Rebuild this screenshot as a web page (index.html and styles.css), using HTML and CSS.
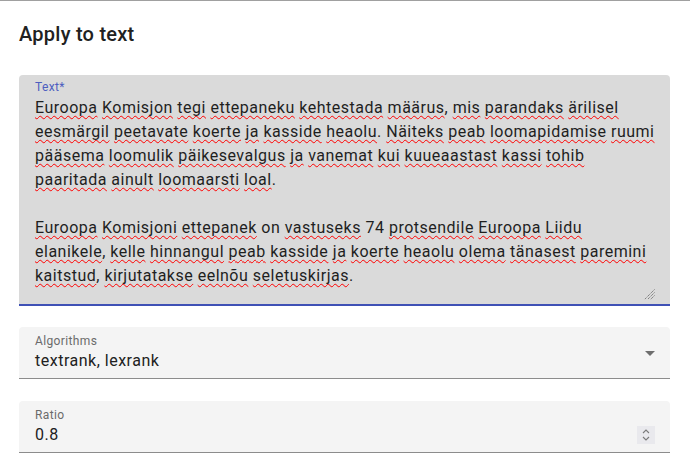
FILE: index.html
```html
<!DOCTYPE html>
<html lang="et">
<head>
<meta charset="utf-8">
<title>Apply to text</title>
<link rel="stylesheet" href="styles.css">
</head>
<body>
<div class="page">
  <h2 class="title">Apply to text</h2>

  <div class="textfield">
    <div class="tf-label">Text*</div>
    <div class="tf-content">
      <p><span class="sp">Euroopa</span> <span class="sp">Komisjon</span> <span class="sp">tegi</span> <span class="sp">ettepaneku</span> <span class="sp">kehtestada</span> <span class="sp">määrus</span>, <span class="sp">mis</span> <span class="sp">parandaks</span> <span class="sp">ärilisel</span><br><span class="sp">eesmärgil</span> <span class="sp">peetavate</span> <span class="sp">koerte</span> <span class="sp">ja</span> <span class="sp">kasside</span> <span class="sp">heaolu</span>. <span class="sp">Näiteks</span> <span class="sp">peab</span> <span class="sp">loomapidamise</span> <span class="sp">ruumi</span><br><span class="sp">pääsema</span> <span class="sp">loomulik</span> <span class="sp">päikesevalgus</span> <span class="sp">ja</span> <span class="sp">vanemat</span> <span class="sp">kui</span> <span class="sp">kuueaastast</span> <span class="sp">kassi</span> <span class="sp">tohib</span><br><span class="sp">paaritada</span> <span class="sp">ainult</span> <span class="sp">loomaarsti</span> <span class="sp">loal</span>.</p>
      <p class="para2"><span class="sp">Euroopa</span> <span class="sp">Komisjoni</span> <span class="sp">ettepanek</span> on <span class="sp">vastuseks</span> 74 <span class="sp">protsendile</span> <span class="sp">Euroopa</span> <span class="sp">Liidu</span><br><span class="sp">elanikele</span>, <span class="sp">kelle</span> <span class="sp">hinnangul</span> <span class="sp">peab</span> <span class="sp">kasside</span> <span class="sp">ja</span> <span class="sp">koerte</span> <span class="sp">heaolu</span> <span class="sp">olema</span> <span class="sp">tänasest</span> <span class="sp">paremini</span><br><span class="sp">kaitstud</span>, <span class="sp">kirjutatakse</span> <span class="sp">eelnõu</span> <span class="sp">seletuskirjas</span>.</p>
    </div>
    <svg class="resizer" width="11" height="11" viewBox="0 0 11 11" aria-hidden="true">
      <line x1="10.5" y1="0.5" x2="0.5" y2="10.5" stroke="#6f6f6f" stroke-width="1" stroke-dasharray="1.2 0.8"/>
      <line x1="10.5" y1="3.5" x2="3.5" y2="10.5" stroke="#6f6f6f" stroke-width="1" stroke-dasharray="1.2 0.8"/>
      <line x1="10.5" y1="6.5" x2="6.5" y2="10.5" stroke="#6f6f6f" stroke-width="1" stroke-dasharray="1.2 0.8"/>
    </svg>
  </div>

  <div class="field select">
    <div class="field-main">
      <div class="field-label">Algorithms</div>
      <div class="field-value">textrank, lexrank</div>
    </div>
    <svg class="arrow" width="10" height="5" viewBox="0 0 10 5" aria-hidden="true">
      <path d="M0 0 L10 0 L5 5 Z" fill="#6e6e6e"/>
    </svg>
  </div>

  <div class="field number">
    <div class="field-main">
      <div class="field-label">Ratio</div>
      <div class="field-row">
        <div class="field-value">0.8</div>
        <svg class="spinner" width="18" height="18" viewBox="0 0 18 18" aria-hidden="true">
          <rect x="0" y="0" width="18" height="18" fill="#e9e9ed"/>
          <path d="M6 7 L9 4 L12 7" fill="none" stroke="#7a7a7a" stroke-width="1.1"/>
          <path d="M6 11 L9 14 L12 11" fill="none" stroke="#7a7a7a" stroke-width="1.1"/>
        </svg>
      </div>
    </div>
  </div>
</div>
</body>
</html>
```

FILE: styles.css
```css
html, body {
  margin: 0;
  padding: 0;
  background: #ffffff;
}

body {
  border-top: 1px solid #a0a0a0;
  font-family: Roboto, "Noto Sans", "Liberation Sans", sans-serif;
  color: #212121;
}

.page {
  padding: 17px 20px 0 19px;
}

.title {
  margin: 0 0 25px;
  font-size: 20px;
  font-weight: 500;
  line-height: 32px;
  letter-spacing: 0.25px;
  color: #212121;
}

.textfield {
  position: relative;
  background: #dadada;
  border-radius: 4px 4px 0 0;
  border-bottom: 2px solid #3f51b5;
  padding: 4px 12px 16px 16px;
  margin-bottom: 21px;
}

.tf-label {
  font-size: 12px;
  line-height: 16px;
  letter-spacing: 0.375px;
  margin-bottom: 1px;
  color: #4d5ec0;
}

.tf-content {
  font-size: 16px;
  line-height: 24px;
  letter-spacing: 0.5px;
  color: #1f1f1f;
  white-space: nowrap;
}

.tf-content p {
  margin: 0;
}

.tf-content .para2 {
  margin-top: 24px;
}

.sp {
  text-decoration-line: underline;
  text-decoration-style: wavy;
  text-decoration-color: #ff0000;
  text-decoration-thickness: 1.4px;
  text-underline-offset: 2px;
  text-decoration-skip-ink: none;
}

.resizer {
  position: absolute;
  right: 15px;
  bottom: 4px;
  display: block;
}

.field {
  display: flex;
  align-items: center;
  background: #f4f4f4;
  border-radius: 4px 4px 0 0;
  border-bottom: 1px solid #8c8c8c;
  padding: 6px 15px 5px 16px;
}

.field.select {
  margin-bottom: 22px;
}

.field-main {
  flex: 1;
  min-width: 0;
}

.field-label {
  font-size: 12px;
  line-height: 16px;
  letter-spacing: 0.375px;
  color: #6b6b6b;
}

.field-value {
  font-size: 16px;
  line-height: 24px;
  letter-spacing: 0.5px;
  color: #212121;
}

.field-row {
  display: flex;
  align-items: center;
  justify-content: space-between;
}

.arrow,
.spinner {
  display: block;
  flex: none;
}
```
